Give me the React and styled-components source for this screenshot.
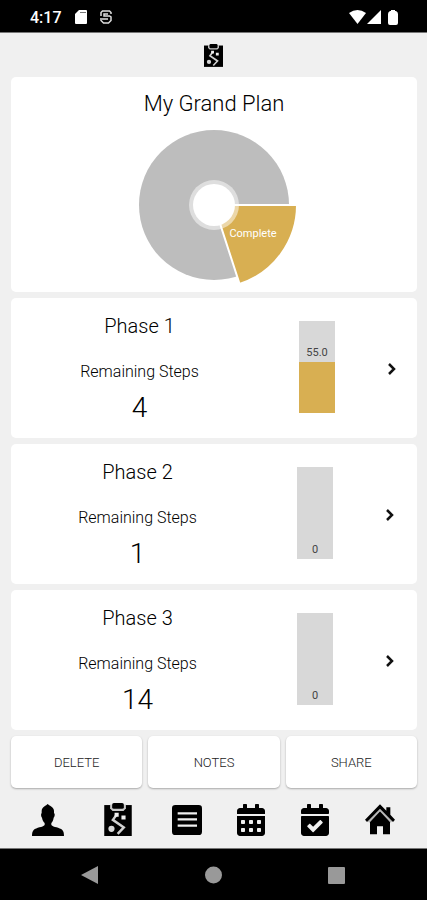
import styled, { createGlobalStyle } from "styled-components";

import { FaCalendarAlt, FaCalendarCheck } from "react-icons/fa";

const phases = [
    { name: "Phase 1", remaining: 4, percent: 55, label: "55.0" },
    { name: "Phase 2", remaining: 1, percent: 0, label: "0" },
    { name: "Phase 3", remaining: 14, percent: 0, label: "0" },
];

const PlanIcon = ({ width, height }) => (
    <svg width={width} height={height} viewBox="0 0 80 96" aria-hidden="true">
        <path fill="#000" d="M0 6h80v90H0z" />
        <path fill="#c8c8c8" d="M17 4h46v12l-7 7H24l-7-7z" />
        <rect x="23" y="0" width="34" height="17" rx="5" fill="#000" />
        <path
            d="M36 34L25 49L57 71L39 90"
            fill="none"
            stroke="#d0d0d0"
            strokeWidth="7"
        />
        <path fill="#f0f0f0" d="M30 28h12v12H30zM50 36h12v12H50z" />
        <circle cx="21" cy="75" r="9" fill="#d8d8d8" />
    </svg>
);

const PersonIcon = () => (
    <svg width="32" height="32" viewBox="0 0 96 96" aria-hidden="true">
        <path d="M47 0C51 5 65 8 66 20L66 27C70 30 68 38 65 41C64 49 61 54 58 57V63C64 70 83 70 91 78C95 82 96 89 96 96H0C0 89 1 82 5 78C13 70 32 70 38 63V57C35 54 31 49 30 41C27 38 26 30 29 27V20C30 8 43 5 47 0Z" />
    </svg>
);

const ListIcon = () => (
    <svg width="30" height="30" viewBox="0 0 90 90" aria-hidden="true">
        <rect width="90" height="90" rx="10" />
        <path
            d="M17 25H75M17 43H75M17 62H75"
            stroke="#f0f0f0"
            strokeWidth="7"
        />
    </svg>
);

const HomeIcon = () => (
    <svg width="30" height="31" viewBox="0 0 90 93" aria-hidden="true">
        <path d="M15 51L45 20L75 51V91H54V67H36V91H15Z" />
        <path
            d="M10 53L45 16L80 53"
            fill="none"
            stroke="#b8b8b8"
            strokeWidth="9"
        />
        <path d="M0 47L45 1L64 20V10H76V32L90 47L84 54L45 14L6 54Z" />
    </svg>
);

const PlanChart = () => (
    <svg
        width="166"
        height="156"
        viewBox="0 0 166 156"
        role="img"
        aria-label="Plan progress"
    >
        <circle cx="83" cy="75" r="75" fill="#bdbdbd" />
        <path
            d="M83 75H166A83 83 0 0 1 108.6 154Z"
            fill="#d8af52"
            stroke="#fff"
            strokeWidth="2"
        />
        <circle cx="83" cy="75" r="25" fill="#fff" fillOpacity="0.5" />
        <circle cx="83" cy="75" r="21" fill="#fff" />
        <text x="122" y="107" fill="#fff" fontSize="11" textAnchor="middle">
            Complete
        </text>
    </svg>
);

const StatusBar = () => (
    <StatusBarStyled>
        <time>4:17</time>
        <svg width="12" height="14" viewBox="0 0 12 14" aria-hidden="true">
            <path
                fill="#fff"
                d="M4 0h7q1 0 1 1v12q0 1-1 1H1q-1 0-1-1V4z"
            />
            <path stroke="#777" d="M5 2.5h6" />
        </svg>
        <svg width="12" height="14" viewBox="0 0 12 14" aria-hidden="true">
            <path
                d="M1 6V2.500L2.500 1H9.500L11 2.500V4M1 8V10.500L3.500 13H8.500L11 10.500V7L9.500 6H4V4H8M2 9H8"
                fill="none"
                stroke="#ddd"
                strokeWidth="1.500"
            />
        </svg>
        <div className="signals">
            <svg width="17" height="14" viewBox="0 0 17 14" aria-hidden="true">
                <path fill="#fff" d="M0 3Q8.500-3 17 3L8.500 14z" />
            </svg>
            <svg width="14" height="14" viewBox="0 0 14 14" aria-hidden="true">
                <path fill="#fff" d="M14 0V14H0z" />
            </svg>
            <svg
                className="battery"
                width="10"
                height="15"
                viewBox="0 0 10 15"
                aria-hidden="true"
            >
                <path
                    fill="#fff"
                    d="M3 0h4v1h1q2 1 2 3v9q0 2-2 2H2q-2 0-2-2V4q0-2 2-3h1z"
                />
            </svg>
        </div>
    </StatusBarStyled>
);

const PhaseCard = ({ phase }) => (
    <PhaseStyled $started={phase.percent > 0}>
        <div className="info">
            <h2>{phase.name}</h2>
            <p>Remaining Steps</p>
            <strong>{phase.remaining}</strong>
        </div>
        <Bar>
            <span>{phase.label}</span>
            <BarFill style={{ height: `${phase.percent}%` }} />
        </Bar>
        <OpenButton type="button" aria-label={`Open ${phase.name}`}>
            <svg width="8" height="12" viewBox="0 0 8 12" aria-hidden="true">
                <path
                    d="M1 1L6 6L1 11"
                    fill="none"
                    stroke="#111"
                    strokeWidth="2.500"
                />
            </svg>
        </OpenButton>
    </PhaseStyled>
);

const App = () => {
    return (
        <>
            <GlobalStyle />
            <Screen>
                <StatusBar />
                <Header>
                    <PlanIcon width="19" height="23" />
                </Header>
                <Main>
                    <PlanCard>
                        <h1>My Grand Plan</h1>
                        <PlanChart />
                    </PlanCard>
                    {phases.map((phase) => (
                        <PhaseCard key={phase.name} phase={phase} />
                    ))}
                    <Actions>
                        <ActionButton type="button">DELETE</ActionButton>
                        <ActionButton type="button">NOTES</ActionButton>
                        <ActionButton type="button">SHARE</ActionButton>
                    </Actions>
                </Main>
                <TabBar>
                    <a href="#profile" aria-label="Profile">
                        <PersonIcon />
                    </a>
                    <a className="plan" href="#plan" aria-label="Plan">
                        <PlanIcon width="28" height="33" />
                    </a>
                    <a href="#notes" aria-label="Notes">
                        <ListIcon />
                    </a>
                    <a className="calendar" href="#calendar" aria-label="Calendar">
                        <FaCalendarAlt size={32} />
                    </a>
                    <a className="calendar" href="#tasks" aria-label="Tasks">
                        <FaCalendarCheck size={32} />
                    </a>
                    <a href="#home" aria-label="Home">
                        <HomeIcon />
                    </a>
                </TabBar>
                <SystemBar>
                    <button type="button" aria-label="Back">
                        <svg width="17" height="18" viewBox="0 0 17 18">
                            <path d="M0 9L17 0V18z" />
                        </svg>
                    </button>
                    <button type="button" aria-label="Home screen">
                        <svg width="17" height="18" viewBox="0 0 17 18">
                            <circle cx="8.500" cy="9" r="8.500" />
                        </svg>
                    </button>
                    <button type="button" aria-label="Recent apps">
                        <svg width="17" height="18" viewBox="0 0 17 18">
                            <rect y="1" width="17" height="17" rx="1" />
                        </svg>
                    </button>
                </SystemBar>
            </Screen>
        </>
    );
};

export default App;

const GlobalStyle = createGlobalStyle`
    * {
        box-sizing: border-box;
    }
    body {
        margin: 0;
        background-color: #f0f0f0;
        font-family: Roboto, sans-serif;
        color: #000;
    }
    h1, h2, p {
        margin: 0;
        font-weight: 300;
    }
    button {
        border: 0;
        padding: 0;
        font-family: inherit;
        cursor: pointer;
    }
    svg {
        display: block;
    }
`;

const Screen = styled.div`
    display: flex;
    flex-direction: column;
    min-height: 100vh;
`;

const StatusBarStyled = styled.div`
    display: flex;
    align-items: center;
    gap: 13px;
    height: 33px;
    padding: 2px 29px 0 30px;
    background-color: #000;
    border-bottom: 1px solid #777;

    time {
        color: #fff;
        font-size: 16px;
        font-weight: 500;
    }
    .signals {
        display: flex;
        flex-grow: 1;
        align-items: center;
        justify-content: flex-end;
        gap: 1px;
    }
    .battery {
        margin-left: 6px;
    }
`;

const Header = styled.header`
    display: flex;
    align-items: center;
    justify-content: center;
    height: 44px;
`;

const Main = styled.main`
    display: flex;
    flex-direction: column;
    gap: 6px;
    padding: 0 10px 0 11px;
`;

const Card = styled.section`
    display: flex;
    background-color: #fff;
    border-radius: 5px;
`;

const PlanCard = styled(Card)`
    flex-direction: column;
    align-items: center;
    gap: 12px;
    padding: 13px 0 6px;

    h1 {
        font-size: 22px;
        line-height: 28px;
    }
`;

const PhaseStyled = styled(Card)`
    align-items: center;
    padding: ${({ $started }) => ($started ? "16px 8px 14px 22px" : "16px 10px 14px 20px")};

    .info {
        display: flex;
        flex-direction: column;
        flex-grow: 1;
        align-items: center;
        padding-right: 53px;
    }
    h2 {
        font-size: 20px;
        line-height: 24px;
    }
    p {
        margin: 24px 0 10px;
        font-size: 16px;
        line-height: 20px;
    }
    strong {
        font-size: 28px;
        font-weight: 300;
        line-height: 32px;
    }
`;

const Bar = styled.div`
    display: flex;
    flex-direction: column;
    justify-content: flex-end;
    width: 36px;
    height: 92px;
    margin: 0 40px 4px 0;
    background-color: #d8d8d8;

    span {
        color: #444;
        font-size: 11px;
        line-height: 18px;
        text-align: center;
    }
`;

const BarFill = styled.div`
    flex-shrink: 0;
    background-color: #d8af52;
`;

const OpenButton = styled.button`
    display: flex;
    align-items: center;
    justify-content: center;
    width: 34px;
    height: 34px;
    background: none;
`;

const Actions = styled.div`
    display: grid;
    grid-template-columns: repeat(3, 1fr);
    gap: 6px;
`;

const ActionButton = styled.button`
    height: 52px;
    border-radius: 5px;
    background-color: #fff;
    box-shadow: 0 1px 2px rgba(0, 0, 0, 0.3);
    color: #222;
    font-size: 13px;
    font-weight: 300;
`;

const TabBar = styled.nav`
    display: flex;
    flex-grow: 1;
    align-items: center;
    justify-content: space-between;
    padding: 3px 32px 0;

    a {
        color: #000;
    }
    .plan {
        padding: 0 4px;
    }
    .calendar svg {
        width: 28px;
    }
`;

const SystemBar = styled.div`
    display: flex;
    align-items: center;
    justify-content: space-between;
    height: 52px;
    padding: 0 82px 0 81px;
    background-color: #000;
    border-top: 1px solid #777;

    button {
        background: none;
    }
    svg {
        fill: #999;
    }
`;
